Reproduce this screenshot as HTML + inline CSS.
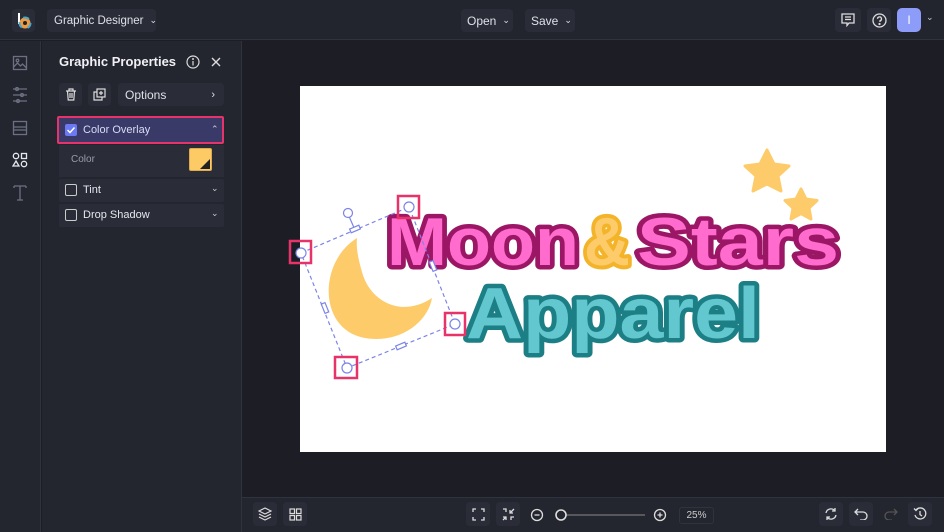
<!DOCTYPE html>
<html><head><meta charset="utf-8"><style>
*{margin:0;padding:0;box-sizing:border-box}
body{width:944px;height:532px;overflow:hidden;background:#1c1d25;font-family:"Liberation Sans",sans-serif;color:#e6e7ee;position:relative}
.a{position:absolute;white-space:nowrap}
.btn{position:absolute;background:#2a2c38;border-radius:4px;font-size:12px;color:#dfe0e8;display:flex;align-items:center;white-space:nowrap}
.ib{position:absolute;background:#2a2c38;border-radius:4px;display:flex;align-items:center;justify-content:center}
svg{display:block}
</style></head><body>
<div class="a" style="left:0;top:0;width:944px;height:40px;background:#22242e;border-bottom:1px solid #30323e"></div>
<div class="ib" style="left:12px;top:9px;width:23px;height:23px">
<svg width="16" height="18" viewBox="0 0 16 18"><path d="M3 1v11" stroke="#fff" stroke-width="2"/><circle cx="9" cy="11" r="5.5" fill="#e94"/><circle cx="9" cy="11" r="5.5" fill="none" stroke="#4ac" stroke-width="2" stroke-dasharray="6 6"/><circle cx="9" cy="11" r="2" fill="#222"/></svg></div>
<div class="btn" style="left:47px;top:9px;width:109px;height:23px;padding-left:7px;font-size:11.5px">Graphic Designer <span style="margin-left:6px;font-size:9px">&#8964;</span></div>
<div class="btn" style="left:461px;top:9px;width:52px;height:23px;padding-left:6px">Open <span style="margin-left:6px;font-size:9px">&#8964;</span></div>
<div class="btn" style="left:525px;top:9px;width:50px;height:23px;padding-left:6px">Save <span style="margin-left:6px;font-size:9px">&#8964;</span></div>
<div class="ib" style="left:835px;top:8px;width:26px;height:24px"><svg width="14" height="14" viewBox="0 0 14 14" fill="none" stroke="#ddd" stroke-width="1.3"><path d="M1 1h12v9H8l-2 2.5V10H1z"/><path d="M4 4h6M4 6.5h6"/></svg></div>
<div class="ib" style="left:867px;top:8px;width:24px;height:24px"><svg width="15" height="15" viewBox="0 0 15 15" fill="none" stroke="#ddd" stroke-width="1.3"><circle cx="7.5" cy="7.5" r="6.5"/><path d="M5.5 5.8a2 2 0 1 1 2.5 2v1.2"/><circle cx="7.5" cy="11" r=".5" fill="#ddd"/></svg></div>
<div class="a" style="left:897px;top:8px;width:24px;height:24px;background:#8d9cf8;border-radius:5px;color:#fff;font-size:12px;text-align:center;line-height:24px">I</div>
<div class="a" style="left:926px;top:12px;font-size:9px;color:#ccc">&#8964;</div>

<div class="a" style="left:0;top:41px;width:41px;height:491px;background:#23252f;border-right:1px solid #30323e"></div>
<svg class="a" style="left:12px;top:55px" width="16" height="150" viewBox="0 0 16 150" fill="none" stroke="#6d7080" stroke-width="1.3">
<rect x="1.5" y="1.5" width="13" height="13"/><circle cx="5.5" cy="5.5" r="1.3"/><path d="M1.5 12l4-4 3 3 2-2 4 4"/>
<path d="M1 34h14M1 40h14M1 46h14"/><circle cx="5" cy="34" r="1.5"/><circle cx="10" cy="40" r="1.5"/><circle cx="6" cy="46" r="1.5"/>
<rect x="1.5" y="66.5" width="13" height="13"/><path d="M1.5 72h13M1.5 75h13"/>
<g stroke="#e6e7ee"><circle cx="4" cy="101" r="2.7"/><rect x="9.5" y="98.5" width="5" height="5"/><path d="M4 106l3 5H1z"/><circle cx="12" cy="109" r="2.7"/></g>
<path d="M2 131h12M8 131v14M5 145h6M2 131v2M14 131v2"/>
</svg>

<div class="a" style="left:42px;top:41px;width:200px;height:491px;background:#23252f;border-right:1px solid #30323e"></div>
<div class="a" style="left:59px;top:54px;font-size:13px;font-weight:bold;color:#f0f0f5">Graphic Properties</div>
<svg class="a" style="left:186px;top:55px" width="14" height="14" viewBox="0 0 14 14" fill="none" stroke="#ddd" stroke-width="1.2"><circle cx="7" cy="7" r="6"/><path d="M7 6v4.5"/><circle cx="7" cy="4" r=".4"/></svg>
<svg class="a" style="left:211px;top:57px" width="10" height="10" viewBox="0 0 10 10" stroke="#ddd" stroke-width="1.4"><path d="M1 1l8 8M9 1l-8 8"/></svg>
<div class="ib" style="left:59px;top:83px;width:23px;height:23px"><svg width="12" height="13" viewBox="0 0 12 13" fill="none" stroke="#ddd" stroke-width="1.2"><path d="M1 3h10M4 3V1h4v2M2.5 3l.7 9h5.6l.7-9M5 5v5M7 5v5"/></svg></div>
<div class="ib" style="left:88px;top:83px;width:23px;height:23px"><svg width="13" height="13" viewBox="0 0 13 13" fill="none" stroke="#ddd" stroke-width="1.2"><rect x="4" y="1" width="8" height="8"/><path d="M4 4H1v8h8V9M8 3v4M6 5h4"/></svg></div>
<div class="btn" style="left:118px;top:83px;width:106px;height:23px;padding-left:7px;font-size:12px">Options<span style="position:absolute;right:9px;font-size:11px">&#8250;</span></div>
<div class="a" style="left:57px;top:116px;width:167px;height:28px;background:#3a3a68;border:2px solid #e8326a;border-radius:2px"></div>
<div class="a" style="left:65px;top:124px;width:12px;height:12px;background:#6b79f2;border-radius:2px"><svg width="12" height="12" viewBox="0 0 12 12" fill="none" stroke="#fff" stroke-width="1.5"><path d="M2.5 6l2.5 2.5 4.5-5"/></svg></div>
<div class="a" style="left:83px;top:124px;font-size:11px;color:#d8dcf6">Color Overlay</div>
<div class="a" style="left:211px;top:124px;font-size:9px;color:#ccc">&#8963;</div>
<div class="a" style="left:59px;top:145px;width:165px;height:32px;background:#2a2c38"></div>
<div class="a" style="left:71px;top:154px;font-size:10px;color:#9a9cab">Color</div>
<div class="a" style="left:189px;top:148px;width:23px;height:23px;background:#fccb66;border-radius:2px;border:1px solid #e0a94c"><svg class="a" style="right:1px;bottom:1px" width="10" height="10"><path d="M10 0V10H0z" fill="#222"/></svg></div>
<div class="a" style="left:59px;top:179px;width:165px;height:23px;background:#2a2c38;border-radius:2px"></div>
<div class="a" style="left:65px;top:184px;width:12px;height:12px;border:1.3px solid #ccc;border-radius:2px"></div>
<div class="a" style="left:83px;top:184px;font-size:11px">Tint</div>
<div class="a" style="left:211px;top:183px;font-size:9px;color:#ccc">&#8964;</div>
<div class="a" style="left:59px;top:204px;width:165px;height:23px;background:#2a2c38;border-radius:2px"></div>
<div class="a" style="left:65px;top:209px;width:12px;height:12px;border:1.3px solid #ccc;border-radius:2px"></div>
<div class="a" style="left:83px;top:209px;font-size:11px">Drop Shadow</div>
<div class="a" style="left:211px;top:208px;font-size:9px;color:#ccc">&#8964;</div>

<div class="a" style="left:300px;top:86px;width:586px;height:366px;background:#fff"></div>
<svg class="a" style="left:0;top:0" width="944" height="532" viewBox="0 0 944 532">
<path d="M357 238 C318 262 318 330 365 338 C400 344 428 322 432 298 C402 318 370 302 362 272 C358 258 356 248 357 238Z" fill="#fdcb6a"/>
<path d="M767 150l7 14 15 2-11 10 3 15-14-7-14 7 3-15-11-10 15-2z" fill="#fdcb6a" stroke="#fdcb6a" stroke-width="3" stroke-linejoin="round"/>
<path d="M801 189l5 10 11 1.5-8 7.5 2 11-10-5.5-10 5.5 2-11-8-7.5 11-1.5z" fill="#fdcb6a" stroke="#fdcb6a" stroke-width="3" stroke-linejoin="round"/>
<g font-family="Liberation Sans" font-weight="bold" paint-order="stroke" stroke-linejoin="round">
<text x="387" y="265" font-size="68" fill="#ff6ccd" stroke="#9b1766" stroke-width="9" textLength="192" lengthAdjust="spacingAndGlyphs">Moon</text>
<text x="584" y="265" font-size="68" fill="#fdcb6a" stroke="#f4b42a" stroke-width="8" textLength="46" lengthAdjust="spacingAndGlyphs">&amp;</text>
<text x="637" y="265" font-size="68" fill="#ff6ccd" stroke="#9b1766" stroke-width="9" textLength="202" lengthAdjust="spacingAndGlyphs">Stars</text>
<text x="466" y="338" font-size="72" fill="#63c7cf" stroke="#1c7f86" stroke-width="9" textLength="294" lengthAdjust="spacingAndGlyphs">Apparel</text>
</g>
<g fill="none" stroke="#7b84e8" stroke-width="1.2">
<path d="M301 253L409 207L455 324L347 368Z" stroke-dasharray="4 3"/>
<path d="M355 230L348 214"/>
<circle cx="348" cy="213" r="4.5" fill="#fff"/>
<circle cx="301" cy="253" r="5" fill="#fff"/><circle cx="409" cy="207" r="5" fill="#fff"/><circle cx="455" cy="324" r="5" fill="#fff"/><circle cx="347" cy="368" r="5" fill="#fff"/>
<rect x="350" y="227" width="10" height="4" fill="#fff" transform="rotate(-23 355 229)"/>
<rect x="396" y="344" width="10" height="4" fill="#fff" transform="rotate(-23 401 346)"/>
<rect x="320" y="306" width="10" height="4" fill="#fff" transform="rotate(68 325 308)"/>
<rect x="428" y="264" width="10" height="4" fill="#fff" transform="rotate(68 433 266)"/>
</g>
<g fill="none" stroke="#e8326a" stroke-width="2.5">
<rect x="290" y="241" width="21" height="22"/><rect x="398" y="196" width="21" height="22"/><rect x="445" y="313" width="20" height="22"/><rect x="335" y="357" width="22" height="21"/>
</g>
</svg>

<div class="a" style="left:242px;top:497px;width:702px;height:35px;background:#23252f;border-top:1px solid #30323e"></div>
<div class="ib" style="left:253px;top:502px;width:24px;height:24px"><svg width="14" height="14" viewBox="0 0 14 14" fill="none" stroke="#ddd" stroke-width="1.2"><path d="M7 1l6 3-6 3-6-3z"/><path d="M1 7l6 3 6-3M1 10l6 3 6-3"/></svg></div>
<div class="ib" style="left:283px;top:502px;width:24px;height:24px"><svg width="13" height="13" viewBox="0 0 13 13" fill="none" stroke="#ddd" stroke-width="1.2"><rect x="1" y="1" width="4.5" height="4.5"/><rect x="7.5" y="1" width="4.5" height="4.5"/><rect x="1" y="7.5" width="4.5" height="4.5"/><rect x="7.5" y="7.5" width="4.5" height="4.5"/></svg></div>
<div class="ib" style="left:466px;top:502px;width:24px;height:24px"><svg width="13" height="13" viewBox="0 0 13 13" fill="none" stroke="#ddd" stroke-width="1.3"><path d="M1 4V1h3M9 1h3v3M12 9v3H9M4 12H1V9"/></svg></div>
<div class="ib" style="left:496px;top:502px;width:24px;height:24px"><svg width="13" height="13" viewBox="0 0 13 13" fill="none" stroke="#ddd" stroke-width="1.3"><path d="M1 1h3v3M12 1L8 5M8 2v3h3M1 9h3v3M9 12V9h3M1 12l3-3"/></svg></div>
<svg class="a" style="left:530px;top:508px" width="140" height="14" viewBox="0 0 140 14" fill="none" stroke="#ddd" stroke-width="1.3">
<circle cx="7" cy="7" r="5.5"/><path d="M4.5 7h5"/>
<path d="M30 7h85" stroke="#777"/><circle cx="31" cy="7" r="5" fill="#23252f" stroke-width="1.6"/>
<circle cx="130" cy="7" r="5.5"/><path d="M127.5 7h5M130 4.5v5"/></svg>
<div class="a" style="left:679px;top:507px;width:35px;height:17px;border:1px solid #30323e;border-radius:3px;font-size:10px;color:#ccc;text-align:center;line-height:15px">25%</div>
<div class="ib" style="left:819px;top:502px;width:24px;height:24px"><svg width="14" height="14" viewBox="0 0 14 14" fill="none" stroke="#ddd" stroke-width="1.3"><path d="M2 6a5 5 0 0 1 9-2M12 8a5 5 0 0 1-9 2M11 1v3H8M3 13v-3h3"/></svg></div>
<div class="ib" style="left:849px;top:502px;width:24px;height:24px"><svg width="14" height="12" viewBox="0 0 14 12" fill="none" stroke="#ddd" stroke-width="1.3"><path d="M4 1L1 4l3 3M1 4h8a4 4 0 0 1 0 8H6"/></svg></div>
<div class="a" style="left:879px;top:502px;width:24px;height:24px;display:flex;align-items:center;justify-content:center"><svg width="14" height="12" viewBox="0 0 14 12" fill="none" stroke="#555" stroke-width="1.3"><path d="M10 1l3 3-3 3M13 4H5a4 4 0 0 0 0 8h3"/></svg></div>
<div class="ib" style="left:908px;top:502px;width:24px;height:24px"><svg width="14" height="14" viewBox="0 0 14 14" fill="none" stroke="#ddd" stroke-width="1.3"><path d="M3 3a5.5 5.5 0 1 1-1 5M1 1.5L3 3.5 5 1.5M7 4v3.5l2 1.5"/></svg></div>
</body></html>
